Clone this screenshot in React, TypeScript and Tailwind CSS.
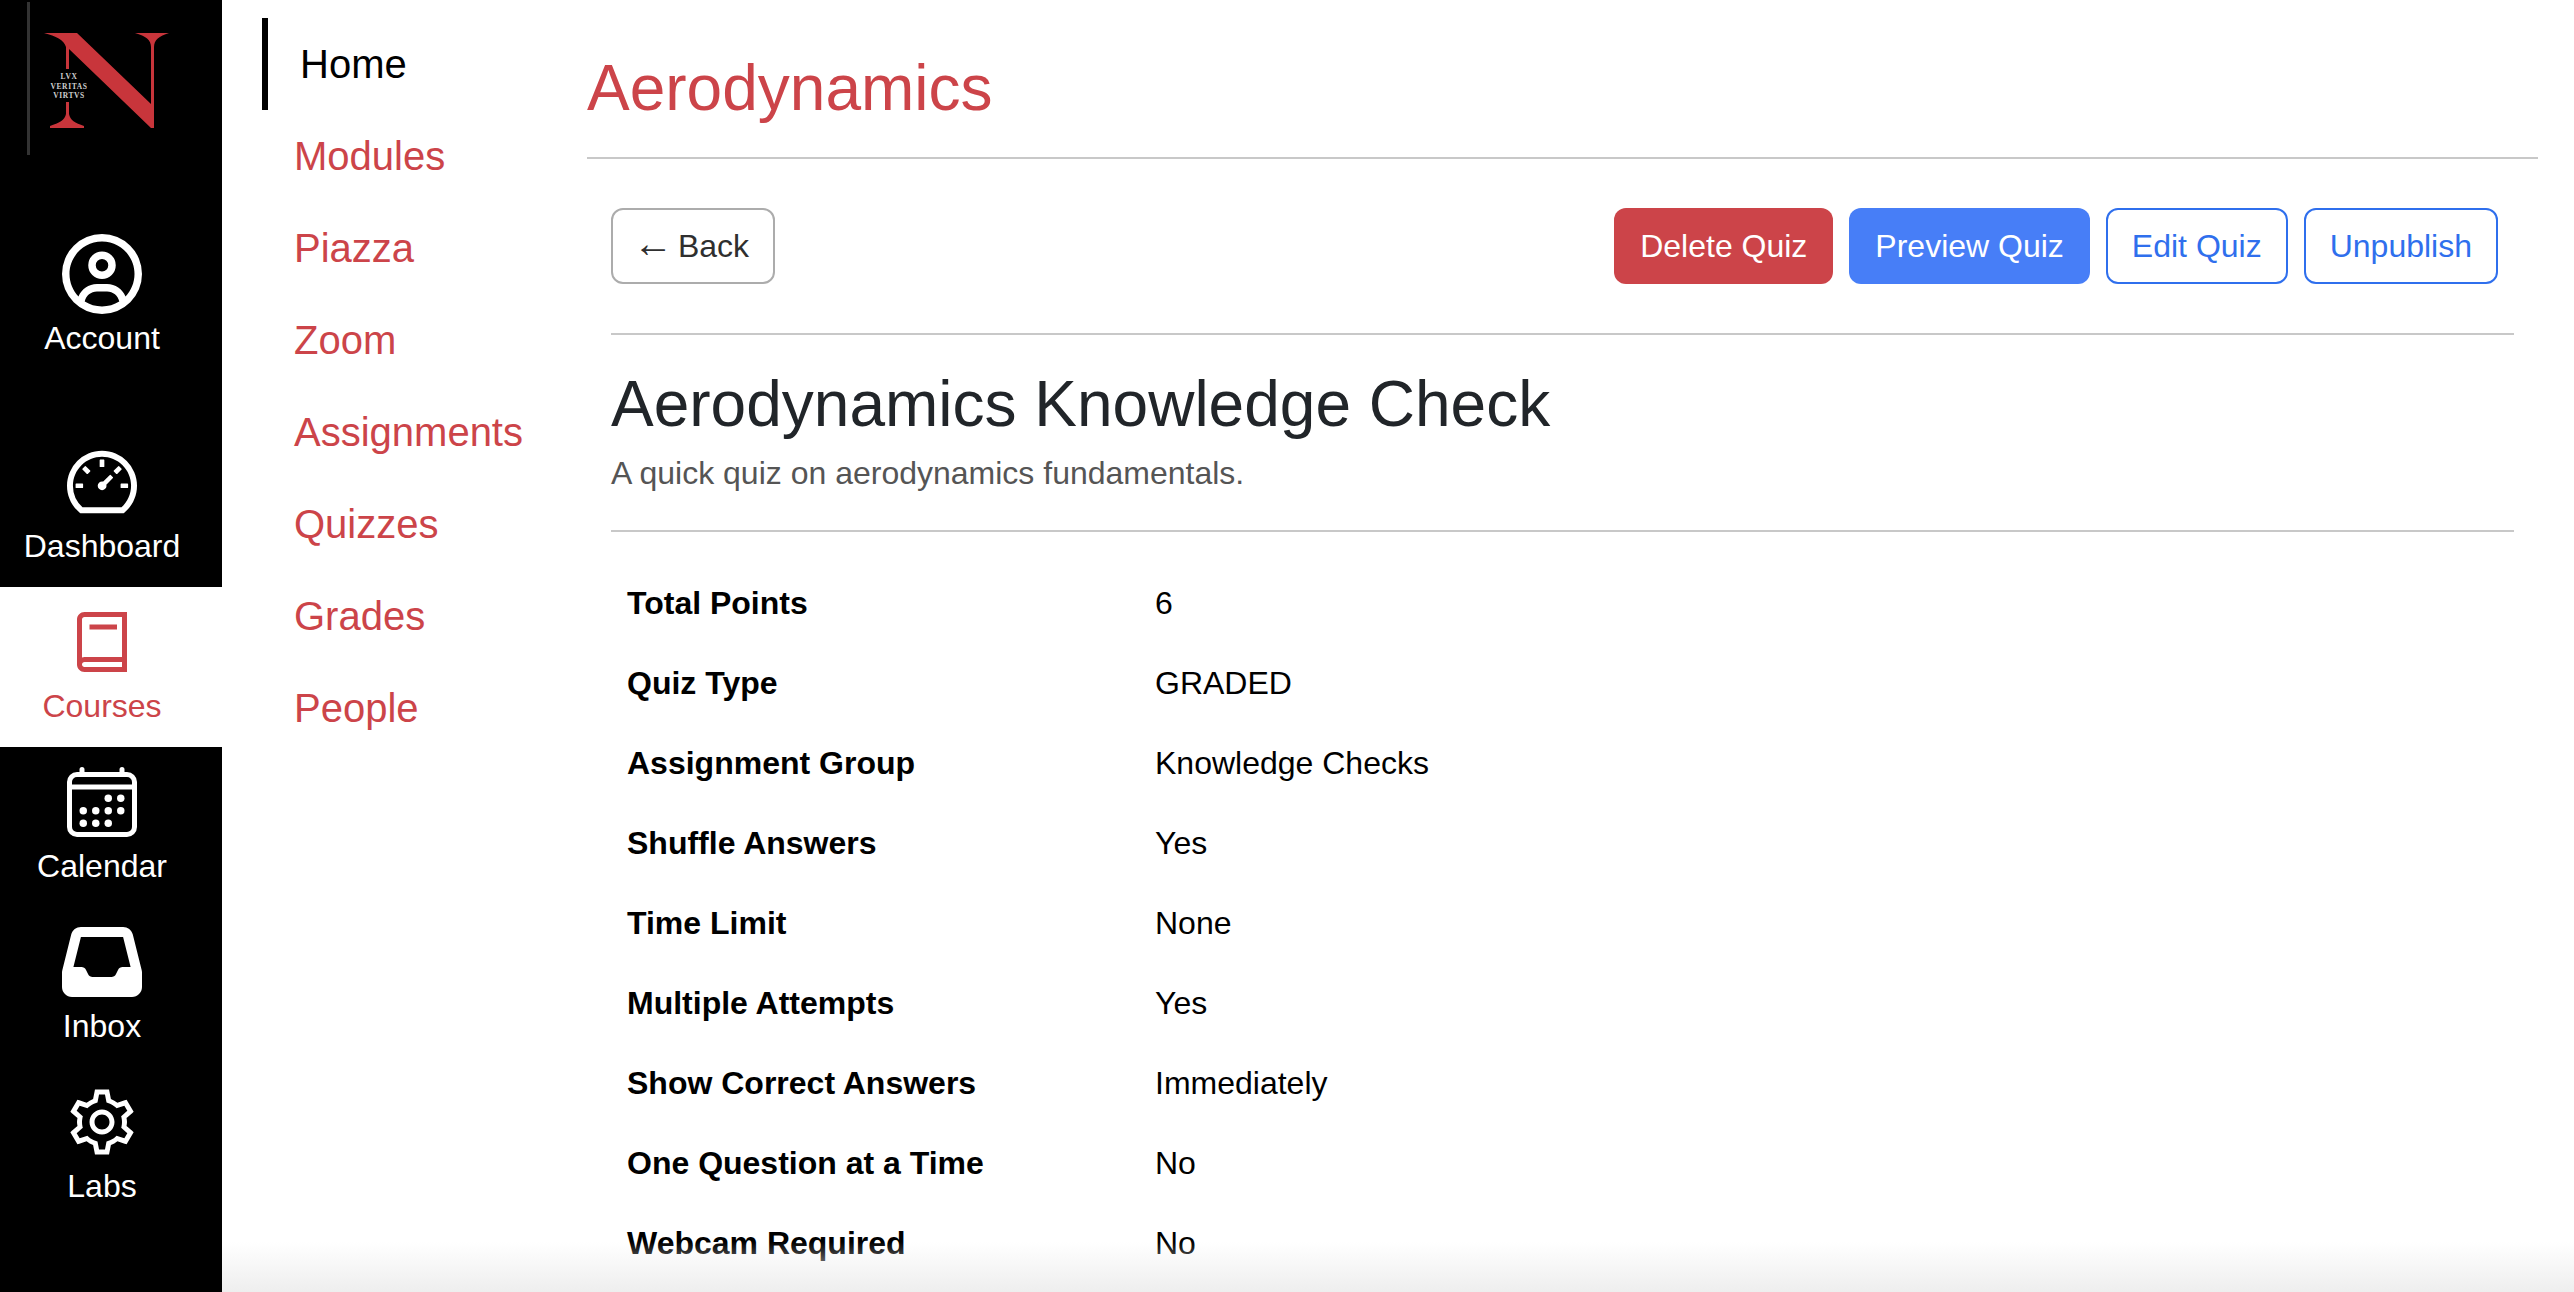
import React from 'react';
import { FaRegCircleUser, FaInbox } from 'react-icons/fa6';
import { AiOutlineDashboard } from 'react-icons/ai';
import { LiaBookSolid, LiaCogSolid } from 'react-icons/lia';
import { IoCalendarOutline } from 'react-icons/io5';

const font = { fontFamily: '"Liberation Sans", Arial, sans-serif' };

const sideLinks = [
  { label: 'Account', Icon: FaRegCircleUser, mb: 'mb-12' },
  { label: 'Dashboard', Icon: AiOutlineDashboard, mb: '' },
  { label: 'Courses', Icon: LiaBookSolid, mb: '', active: true },
  { label: 'Calendar', Icon: IoCalendarOutline, mb: '' },
  { label: 'Inbox', Icon: FaInbox, mb: '' },
  { label: 'Labs', Icon: LiaCogSolid, mb: '' },
];

const courseLinks = ['Modules', 'Piazza', 'Zoom', 'Assignments', 'Quizzes', 'Grades', 'People'];

const details = [
  ['Total Points', '6'],
  ['Quiz Type', 'GRADED'],
  ['Assignment Group', 'Knowledge Checks'],
  ['Shuffle Answers', 'Yes'],
  ['Time Limit', 'None'],
  ['Multiple Attempts', 'Yes'],
  ['Show Correct Answers', 'Immediately'],
  ['One Question at a Time', 'No'],
  ['Webcam Required', 'No'],
];

function Logo() {
  return (
    <div className="relative h-[219px] shrink-0">
      <div className="absolute left-[27px] top-[2px] h-[153px] w-[3px] bg-[#333333]" />
      <svg className="absolute left-[44px] top-[31px]" width="126" height="100" viewBox="0 0 126 100">
        <path
          d="M0 2 H33 L107 73 V16 C107 9 102 5 91 2 H125 C115 5 110 9 110 16 V97 H107 L25 18 V38 H22 V16 C20 9 12 5 0 2 Z"
          fill="#c8353b"
        />
        <path d="M22 71 H25 V83 C26 89 31 92 40 95 V97 H6 V95 C15 92 21 89 22 83 Z" fill="#c8353b" />
      </svg>
      <div
        className="absolute left-[46px] top-[72px] w-[46px] text-center text-[7.5px] leading-[9.5px] font-bold tracking-[0.6px] text-[#cfcfcf]"
        style={{ fontFamily: '"Liberation Serif", serif' }}
      >
        <div>LVX</div>
        <div>VERITAS</div>
        <div>VIRTVS</div>
      </div>
    </div>
  );
}

export default function App() {
  return (
    <div className="relative flex h-[1292px] w-full overflow-hidden bg-white text-[32px] text-black" style={font}>
      <aside className="flex h-full w-[222px] shrink-0 flex-col bg-black text-white">
        <Logo />
        {sideLinks.map(({ label, Icon, mb, active }) => (
          <div
            key={label}
            className={`flex h-[160px] shrink-0 flex-col items-center pt-[15px] pr-[18px] ${mb} ${
              active ? 'bg-white text-[#cc4449]' : 'bg-black text-white'
            }`}
          >
            <Icon className="text-[80px]" />
            <span className="mt-[4px] leading-[40px]">{label}</span>
          </div>
        ))}
      </aside>

      <nav className="mt-[18px] w-[365px] shrink-0 pl-[40px] text-[40px]">
        <div className="flex h-[92px] items-center border-l-[6px] border-black pl-[32px] text-black">Home</div>
        {courseLinks.map((link) => (
          <div key={link} className="flex h-[92px] items-center pl-[32px] text-[#cc4449]">
            {link}
          </div>
        ))}
      </nav>

      <main className="mr-[36px] min-w-0 flex-1">
        <h1 className="flex h-[159px] items-center border-b-2 border-[#c8c8c8] pt-[18px] text-[64px] text-[#cc4449]">
          Aerodynamics
        </h1>
        <div className="px-6">
          <div className="flex items-center justify-between pt-[49px] pr-4 pb-[49px]">
            <button className="h-[76px] rounded-[12px] border-2 border-[#acacac] px-[24px] text-[#2f2f2f]">
              <span className="-mx-[4px] text-[40px] leading-none">←</span> Back
            </button>
            <div className="flex gap-4">
              <button className="h-[76px] rounded-[12px] bg-[#cc4449] px-[26px] text-white">Delete Quiz</button>
              <button className="h-[76px] rounded-[12px] bg-[#477ef7] px-[26px] text-white">Preview Quiz</button>
              <button className="h-[76px] rounded-[12px] border-2 border-[#2f6fed] px-[24px] text-[#2f6fed]">Edit Quiz</button>
              <button className="h-[76px] rounded-[12px] border-2 border-[#2f6fed] px-[24px] text-[#2f6fed]">Unpublish</button>
            </div>
          </div>
          <div className="border-t-2 border-[#c8c8c8] pt-[31px] pb-[33px]">
            <h2 className="text-[64px] leading-[76px] text-[#212529]">Aerodynamics Knowledge Check</h2>
            <p className="mt-[7px] leading-[48px] text-[#555555]">A quick quiz on aerodynamics fundamentals.</p>
          </div>
          <div className="border-t-2 border-[#c8c8c8] pt-[31px]">
            {details.map(([name, value]) => (
              <div key={name} className="flex h-[80px] items-center px-4">
                <div className="w-[528px] shrink-0 font-bold">{name}</div>
                <div>{value}</div>
              </div>
            ))}
          </div>
        </div>
      </main>

      <div className="pointer-events-none absolute right-0 bottom-0 left-[222px] h-[50px] bg-gradient-to-b from-transparent to-[#eeeeee]" />
    </div>
  );
}
